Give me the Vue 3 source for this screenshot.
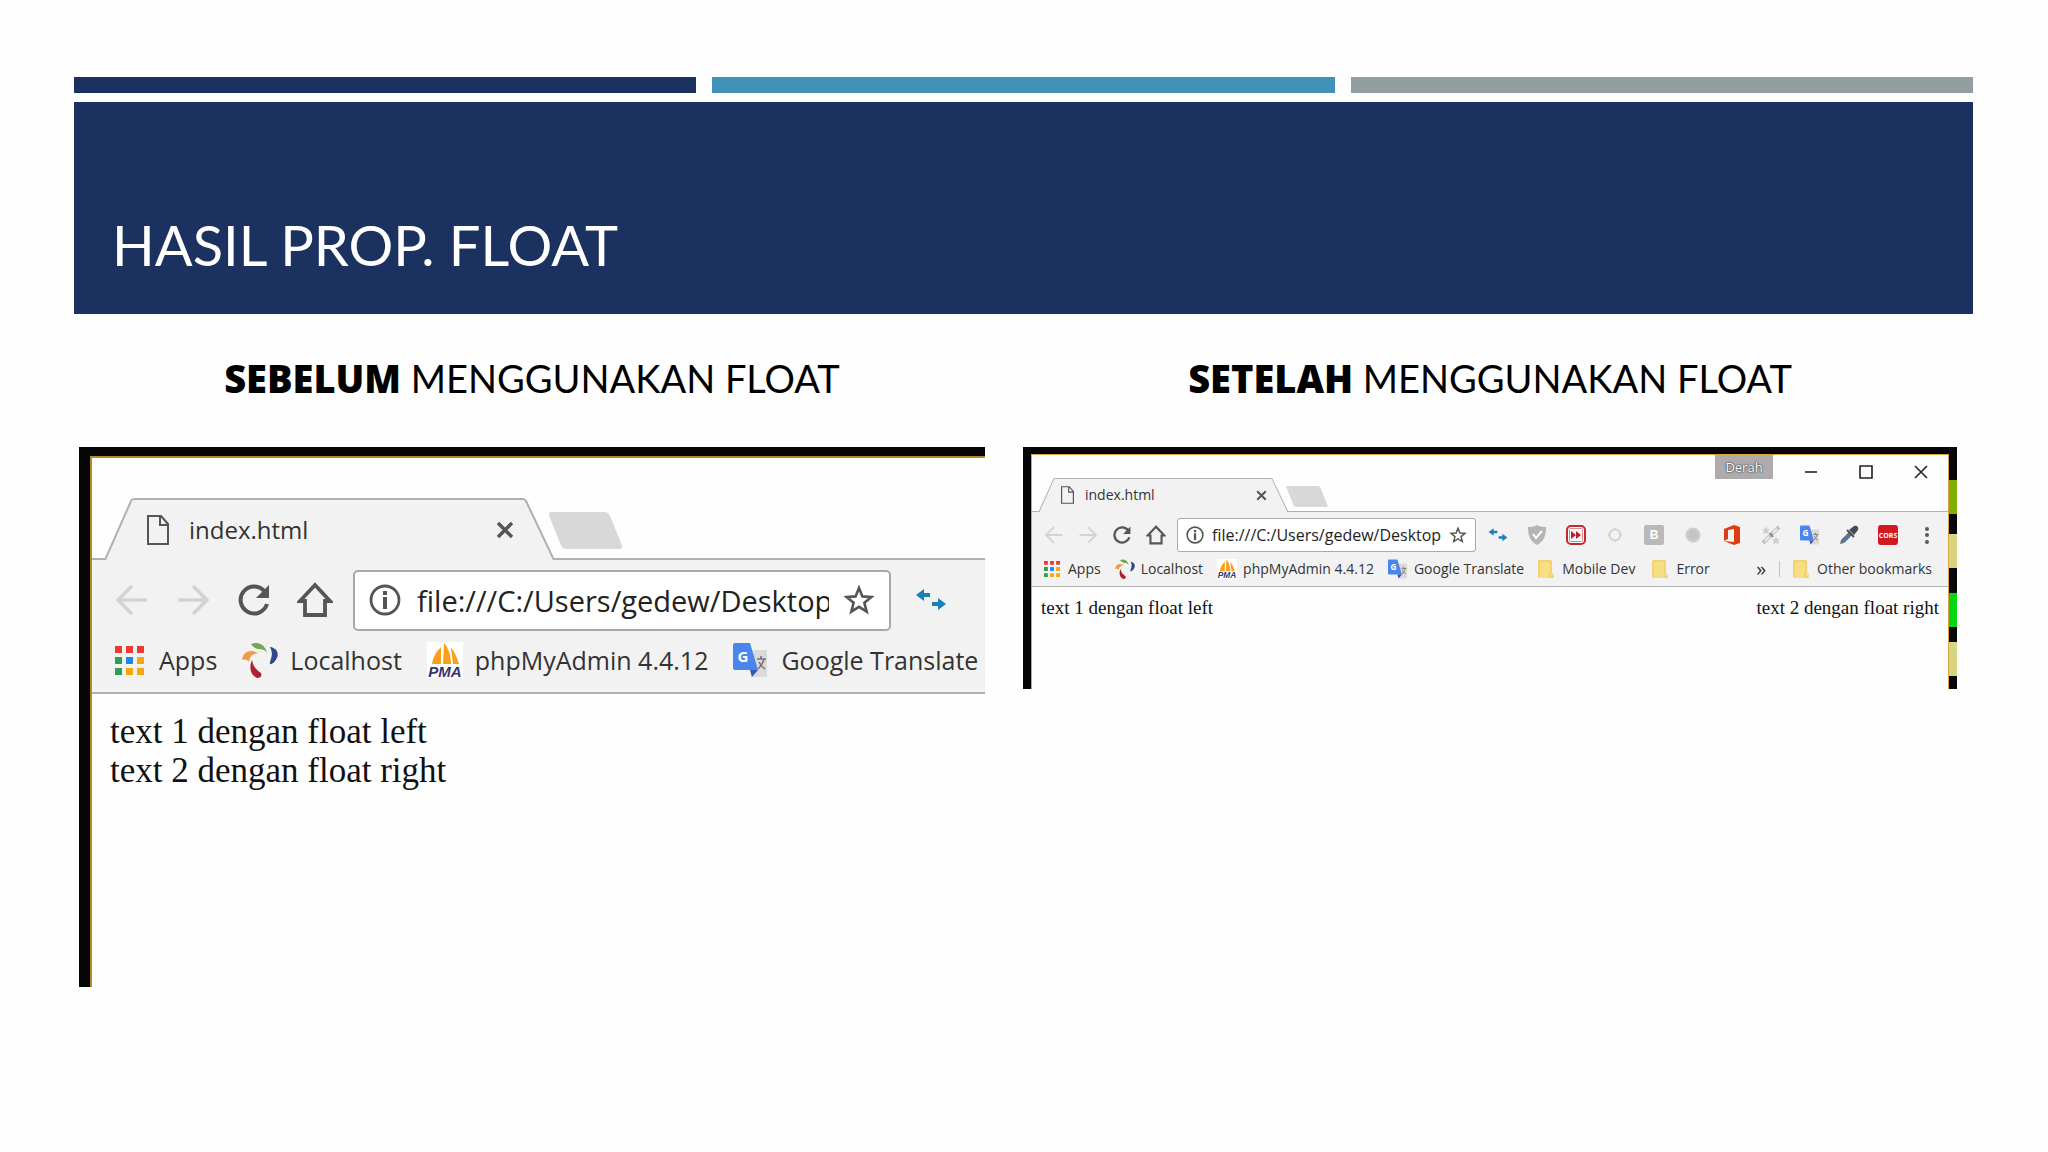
<template>
  <main class="slide">
    <!-- Shared icon shapes -->
    <svg class="sprite" aria-hidden="true">
      <symbol id="i-page" viewBox="0 0 22 30">
        <path d="M1 1h13l7 8v20H1z M13 1v9h8" fill="none" stroke="#555" stroke-width="2" />
      </symbol>
      <symbol id="i-close" viewBox="0 0 18 18">
        <path d="M2 2l14 14M16 2L2 16" stroke="#555" stroke-width="3.4" />
      </symbol>
      <symbol id="i-back" viewBox="0 0 32 32">
        <path d="M31 16H3M16 2L2 16l14 14" fill="none" stroke="#d3d3d5" stroke-width="3.4" />
      </symbol>
      <symbol id="i-forward" viewBox="0 0 32 32">
        <path d="M1 16h28M16 2l14 14-14 14" fill="none" stroke="#d3d3d5" stroke-width="3.4" />
      </symbol>
      <symbol id="i-reload" viewBox="0 0 32 32">
        <path d="M27 8A13.5 13.5 0 1 0 29 20" fill="none" stroke="#555" stroke-width="4" />
        <path d="M31 1v13H18z" fill="#555" />
      </symbol>
      <symbol id="i-home" viewBox="0 0 36 36">
        <path d="M18 3L3 19h5v14h20V19h5z" fill="none" stroke="#555" stroke-width="3.8" />
      </symbol>
      <symbol id="i-info" viewBox="0 0 32 32">
        <circle cx="16" cy="16" r="14" fill="none" stroke="#555" stroke-width="2.8" />
        <path d="M14 7h4v4h-4zM14 13h4v12h-4z" fill="#555" />
      </symbol>
      <symbol id="i-star" viewBox="0 0 32 32">
        <path d="M16 4l3.4 8.4 9 .6-7 5.8 2.3 8.8-7.7-4.8-7.7 4.8 2.3-8.8-7-5.8 9-.6z" fill="none" stroke="#555" stroke-width="2.6" />
      </symbol>
      <symbol id="i-arrows" viewBox="0 0 32 32">
        <path d="M1 11l8-6v4h6v4H9v4zM31 20l-8-6v4h-6v4h6v4z" fill="#1b7fb8" />
      </symbol>
      <symbol id="i-apps" viewBox="0 0 29 29">
        <path d="M0 0h7v7H0zM11 0h7v7h-7zM22 0h7v7h-7z" fill="#ee3b2f" />
        <path d="M0 11h7v7H0zM0 22h7v7H0z" fill="#2f9e54" />
        <path d="M11 11h7v7h-7z" fill="#2186ea" />
        <path d="M22 11h7v7h-7zM11 22h7v7h-7zM22 22h7v7h-7z" fill="#f7a80d" />
      </symbol>
      <symbol id="i-localhost" viewBox="0 0 36 36">
        <path d="M9 2c7-3 14 0 16 9-2-3-4-4-8-4-3 0-6-2-8-5z" fill="#6fa84e" />
        <path d="M28 5c8 1 10 8 5 14-3 4-6 4-5 1 2-6 3-9 0-15z" fill="#30478c" />
        <path d="M0 18C1 9 9 7 16 11c-6 1-8 3-9 9-1-2-4-3-7-2z" fill="#f29a4a" />
        <path d="M10 18c-3 7-2 15 5 18 4 0 5-2 4-5-5-3-8-7-9-13z" fill="#ad2230" />
      </symbol>
      <symbol id="i-pma" viewBox="0 0 36 36">
        <path d="M0 0h36v36H0z" fill="#fff" />
        <path d="M14 5v17H5C6 15 9 10 14 5zM17 1c5 6 7 13 7 21h-8zM24 5c4 5 6 11 8 17h-6z" fill="#f8a01c" />
        <text x="18" y="35" class="pma-text">PMA</text>
      </symbol>
      <symbol id="i-translate" viewBox="0 0 36 36">
        <path d="M14 8h20v27H18z" fill="#dadada" />
        <path d="M2 1h15l8 27H2q-2 0-2-2V3q0-2 2-2z" fill="#4a85ee" />
        <path d="M17 28h8l-6 7z" fill="#3358b8" />
        <path d="M24 17h9M28 14v3M31 17c-1 5-4 8-6 10M26 20c2 4 3 5 6 7" fill="none" stroke="#777" stroke-width="1.6" />
        <text x="10" y="20" class="g-text">G</text>
      </symbol>
      <symbol id="i-shield" viewBox="0 0 20 20">
        <path d="M1 2q6 0 9-2 3 2 9 2c0 9-2 14-9 18C3 16 1 11 1 2z" fill="#b5b5b5" />
        <path d="M6 9l3 4 6-7" fill="none" stroke="#fff" stroke-width="2" />
      </symbol>
      <symbol id="i-skip" viewBox="0 0 20 20">
        <rect x="1" y="1" width="18" height="18" rx="4" fill="#fff" stroke="#c22830" stroke-width="2" />
        <rect x="3.5" y="3.5" width="13" height="13" rx="1" fill="none" stroke="#d9636a" stroke-width=".8" />
        <path d="M5 6l5 4-5 4zM10 6l5 4-5 4z" fill="#b81f28" />
      </symbol>
      <symbol id="i-ring" viewBox="0 0 20 20">
        <circle cx="10" cy="10" r="5.5" fill="none" stroke="#d2d2d4" stroke-width="2" />
        <path d="M10 3v2M10 15v2M3 10h2M15 10h2" stroke="#d2d2d4" stroke-width="2" />
      </symbol>
      <symbol id="i-b" viewBox="0 0 20 20">
        <rect width="20" height="20" rx="2" fill="#b9b9b9" />
        <text x="10" y="14" class="b-text">B</text>
      </symbol>
      <symbol id="i-dot" viewBox="0 0 20 20">
        <circle cx="10" cy="10" r="7.5" fill="#cdcdcd" />
        <circle cx="10" cy="10" r="5" fill="#c4c4c4" />
      </symbol>
      <symbol id="i-office" viewBox="0 0 20 20">
        <path d="M2 4l10-4 6 2v16l-6 2-10-4 10 1V4L6 5v9l-4 2z" fill="#dc3e12" />
      </symbol>
      <symbol id="i-tools" viewBox="0 0 20 20">
        <path d="M5 1l1 3 3 0-2 2 1 3-3-1-3 1 1-3-2-2h3zM15 11l1 3h3l-2 2 1 3-3-1-3 1 1-3-2-2h3z" fill="#cdcdcd" />
        <path d="M2 18L18 2" stroke="#c2c2c2" stroke-width="4" />
        <path d="M4 16l4-4M12 8l4-4" stroke="#eee" stroke-width="2" />
        <path d="M9 8l3 4" stroke="#888" stroke-width="2" />
      </symbol>
      <symbol id="i-dropper" viewBox="0 0 20 20">
        <path d="M1 19l1-4 8-8 3 3-8 8z" fill="#6b7078" />
        <path d="M3 17l1-2 5-4 2 1-5 5z" fill="#3f76cf" />
        <path d="M8 5l7 7" stroke="#484d55" stroke-width="2" />
        <path d="M10 5l5-4c3-1 5 1 4 4l-4 5z" fill="#484d55" />
      </symbol>
      <symbol id="i-cors" viewBox="0 0 20 20">
        <rect width="20" height="20" rx="3" fill="#d21820" />
        <text x="10" y="13" class="cors-text">CORS</text>
      </symbol>
      <symbol id="i-menu" viewBox="0 0 20 20">
        <g fill="#5a5a5a">
          <circle cx="10" cy="4" r="2" />
          <circle cx="10" cy="10" r="2" />
          <circle cx="10" cy="17" r="2" />
        </g>
      </symbol>
      <symbol id="i-folder" viewBox="0 0 16 18">
        <path d="M0 1q0-1 1-1h12l1 1v12l2 1v4H1q-1 0-1-1z" fill="#f8de82" />
        <path d="M1 17V1h12v12l-1 1v3h3" fill="none" stroke="#e9c75c" />
      </symbol>
    </svg>

    <div class="bars">
      <span class="bar navy"></span>
      <span class="bar blue"></span>
      <span class="bar gray"></span>
    </div>
    <header class="banner">
      <h1>HASIL PROP. FLOAT</h1>
    </header>

    <div class="columns">
      <section v-for="shot in shots" :key="shot.id" :class="['column', shot.id]">
        <h2><strong>{{ shot.lead }}</strong> MENGGUNAKAN FLOAT</h2>
        <div class="desktop">
          <div class="window">
            <div class="titlebar">
              <div class="tab">
                <svg class="tab-shape" viewBox="0 0 449 62" preserveAspectRatio="none" aria-hidden="true">
                  <path d="M0 62L26 3Q27 1 29 1H418Q420 1 421 3L449 62" />
                </svg>
                <svg class="page-icon"><use href="#i-page" /></svg>
                <span class="tab-title">index.html</span>
                <button class="tab-close" aria-label="Close tab"><svg><use href="#i-close" /></svg></button>
              </div>
              <button class="new-tab" aria-label="New tab"></button>
              <div v-if="shot.full" class="controls">
                <span class="user">Derah</span>
                <button aria-label="Minimize"><svg viewBox="0 0 14 14"><path d="M1 7h12" /></svg></button>
                <button aria-label="Maximize"><svg viewBox="0 0 14 14"><path d="M1 1h12v12H1z" /></svg></button>
                <button aria-label="Close"><svg viewBox="0 0 14 14"><path d="M1 1l12 12M13 1L1 13" /></svg></button>
              </div>
            </div>

            <div class="toolbar">
              <button v-for="name in navIcons" :key="name" class="nav" :aria-label="name">
                <svg><use :href="'#i-' + name" /></svg>
              </button>
              <div class="omnibox">
                <svg><use href="#i-info" /></svg>
                <input type="text" aria-label="Address" value="file:///C:/Users/gedew/Desktop" />
                <button aria-label="Bookmark this page"><svg><use href="#i-star" /></svg></button>
              </div>
              <div class="extensions">
                <button v-for="name in shot.extensions" :key="name" :aria-label="name">
                  <svg><use :href="'#i-' + name" /></svg>
                </button>
              </div>
            </div>

            <nav class="bookmarks">
              <a v-for="mark in shot.bookmarks" :key="mark.label" href="#" :class="mark.icon">
                <svg><use :href="'#i-' + mark.icon" /></svg>
                <span>{{ mark.label }}</span>
              </a>
              <div v-if="shot.full" class="overflow">
                <button aria-label="More bookmarks">»</button>
                <a href="#" class="folder"><svg><use href="#i-folder" /></svg><span>Other bookmarks</span></a>
              </div>
            </nav>

            <div class="page">
              <div>text 1 dengan float left</div>
              <div>text 2 dengan float right</div>
            </div>
          </div>
          <div v-if="shot.full" class="wallpaper"></div>
        </div>
      </section>
    </div>
  </main>
</template>

<script setup>
const navIcons = ['back', 'forward', 'reload', 'home'];

const bookmarks = [
  { icon: 'apps', label: 'Apps' },
  { icon: 'localhost', label: 'Localhost' },
  { icon: 'pma', label: 'phpMyAdmin 4.4.12' },
  { icon: 'translate', label: 'Google Translate' },
];

const shots = [
  {
    id: 'before',
    lead: 'SEBELUM',
    full: false,
    extensions: ['arrows'],
    bookmarks,
  },
  {
    id: 'after',
    lead: 'SETELAH',
    full: true,
    extensions: ['arrows', 'shield', 'skip', 'ring', 'b', 'dot', 'office', 'tools', 'translate', 'dropper', 'cors', 'menu'],
    bookmarks: [
      ...bookmarks,
      { icon: 'folder', label: 'Mobile Dev' },
      { icon: 'folder', label: 'Error' },
    ],
  },
];
</script>

<style>
body {
  margin: 0;
  background: #fefefe;
}
</style>

<style scoped>
.slide {
  box-sizing: border-box;
  padding: 77px 75px 0 74px;
  font-family: Lato, "Open Sans", sans-serif;
  color: #000;
}

.sprite {
  display: none;
}

.pma-text {
  font: italic bold 15px "Liberation Sans", sans-serif;
  fill: #34346f;
  text-anchor: middle;
}

.g-text {
  font: bold 15px "Open Sans", sans-serif;
  fill: #fff;
  text-anchor: middle;
}

.b-text {
  font: bold 12px "Liberation Sans", sans-serif;
  fill: #fff;
  text-anchor: middle;
}

.cors-text {
  font: bold 7px "Open Sans", sans-serif;
  fill: #fff;
  text-anchor: middle;
}

.bars {
  display: grid;
  grid-template-columns: repeat(3, 1fr);
  gap: 16px;
}

.bar {
  height: 16px;
}

.navy {
  background: #1a315f;
}

.blue {
  background: #4191b9;
}

.gray {
  background: #929fa1;
}

.banner {
  display: flex;
  align-items: flex-end;
  box-sizing: border-box;
  height: 212px;
  margin-top: 9px;
  padding: 0 38px 35px;
  background: #1b3160;
}

h1 {
  margin: 0;
  font-size: 56px;
  line-height: 68px;
  font-weight: 400;
  color: #fff;
}

.columns {
  display: grid;
  grid-template-columns: minmax(0, 906fr) minmax(0, 934fr);
  gap: 38px;
  align-items: start;
  padding: 40px 16px 0 5px;
}

h2 {
  margin: 0 0 45px;
  font-size: 38px;
  line-height: 48px;
  font-weight: 400;
  text-align: center;
  white-space: nowrap;
}

h2 strong {
  font-family: "Open Sans", sans-serif;
  font-weight: 800;
}

button {
  display: flex;
  align-items: center;
  justify-content: center;
  flex: none;
  padding: 0;
  border: 0;
  background: none;
  font: inherit;
  color: inherit;
}

svg {
  display: block;
  flex: none;
}

/* Sizes of the two browser windows */
.before {
  --frame: 2px;
  --gold: #b18a2c;
  --icon: 32px;
  --text: 25px;
}

.after {
  --frame: 1px;
  --gold: #d9a441;
  --icon: 18px;
  --text: 14px;
}

.desktop {
  display: flex;
  background: #050505;
}

.before .desktop {
  padding: 9px 0 0 11px;
}

.after .desktop {
  padding: 7px 0 0 8px;
}

.window {
  flex: 1;
  min-width: 0;
  border: solid var(--gold);
  border-width: var(--frame) 0 0 var(--frame);
  background: #fefefe;
  font-family: "Open Sans", "Noto Sans", sans-serif;
  color: #333;
}

.after .window {
  border-right-width: 1px;
}

.titlebar {
  display: flex;
  align-items: flex-end;
  box-sizing: border-box;
  height: 102px;
  padding-left: 13px;
  border-bottom: var(--frame) solid #b0b0b2;
}

.after .titlebar {
  height: 57px;
  padding-left: 7px;
}

.tab {
  position: relative;
  display: flex;
  align-items: center;
  box-sizing: border-box;
  width: 449px;
  height: 62px;
  margin-bottom: calc(-1 * var(--frame));
  padding: 2px 40px 0 42px;
}

.after .tab {
  width: 249px;
  height: 34px;
  padding: 0 21px 0 22px;
}

.tab-shape {
  position: absolute;
  inset: 0;
  width: 100%;
  height: 100%;
}

.tab-shape path {
  fill: #f2f2f3;
  stroke: #b0b0b2;
  stroke-width: var(--frame);
  vector-effect: non-scaling-stroke;
}

.page-icon,
.tab-title,
.tab-close {
  position: relative;
}

.page-icon {
  width: 22px;
  height: 30px;
}

.after .page-icon {
  width: 13px;
  height: 18px;
}

.tab-title {
  flex: 1;
  margin-left: 20px;
  font-size: 24px;
  line-height: 1;
}

.after .tab-title {
  margin-left: 11px;
  font-size: 14px;
}

.tab-close svg {
  width: 18px;
  height: 18px;
}

.after .tab-close svg {
  width: 11px;
  height: 11px;
}

.new-tab {
  width: 61px;
  height: 37px;
  margin: 0 0 9px 1px;
  border-radius: 4px;
  background: #d8d8d9;
  transform: skewX(22deg);
}

.after .new-tab {
  width: 34px;
  height: 21px;
  margin: 0 0 4px 2px;
  border-radius: 2px;
}

.controls {
  display: flex;
  align-self: flex-start;
  gap: 41px;
  margin-left: auto;
  padding-right: 20px;
}

.controls .user {
  width: 58px;
  margin-right: -10px;
  background: #adabad;
  font-size: 13px;
  line-height: 24px;
  text-align: center;
  color: #fff;
  text-shadow: 0 0 2px #222, 0 0 1px #444;
}

.controls svg {
  width: 14px;
  height: 14px;
  margin-top: 10px;
}

.controls path {
  fill: none;
  stroke: #222;
  stroke-width: 1.6;
}

.toolbar {
  display: flex;
  align-items: center;
  height: 80px;
  padding: 0 38px 0 22px;
  background: #f2f2f3;
}

.after .toolbar {
  height: 46px;
  padding: 0 11px 0 12px;
}

.nav {
  width: 36px;
  margin-right: 25px;
}

.after .nav {
  width: 20px;
  margin-right: 14px;
}

.nav svg {
  width: var(--icon);
  height: var(--icon);
}

.nav:nth-child(4) {
  margin-right: 20px;
}

.nav:nth-child(4) svg {
  width: 36px;
  height: 36px;
}

.after .nav:nth-child(4) {
  margin-right: 11px;
}

.after .nav:nth-child(4) svg {
  width: 20px;
  height: 20px;
}

.omnibox {
  display: flex;
  flex: 1;
  align-items: center;
  box-sizing: border-box;
  min-width: 0;
  height: 61px;
  padding: 0 14px;
  border: var(--frame) solid #a9a9ab;
  border-radius: 5px;
  background: #fff;
}

.after .omnibox {
  height: 34px;
  padding: 0 8px;
  border-radius: 3px;
}

.omnibox svg {
  width: var(--icon);
  height: var(--icon);
}

.omnibox input {
  flex: 1;
  min-width: 0;
  margin: 0 14px 0 16px;
  padding: 0;
  border: 0;
  outline: 0;
  background: none;
  font-family: inherit;
  font-size: 29px;
  color: #222;
}

.after .omnibox input {
  margin: 0 8px;
  font-size: 16px;
}

.extensions {
  display: flex;
  margin-left: 24px;
}

.extensions svg {
  width: var(--icon);
  height: var(--icon);
}

.after .extensions {
  gap: 19px;
  margin-left: 12px;
}

.after .extensions svg {
  width: 20px;
  height: 20px;
}

.bookmarks {
  display: flex;
  align-items: center;
  box-sizing: border-box;
  height: 54px;
  padding: 0 0 12px 23px;
  border-bottom: var(--frame) solid #b0b0b2;
  background: #f2f2f3;
  white-space: nowrap;
}

.after .bookmarks {
  height: 29px;
  padding: 0 16px 6px 12px;
}

.bookmarks a {
  display: flex;
  align-items: center;
  gap: 12px;
  margin-right: 25px;
  font-size: var(--text);
  line-height: 1;
  color: inherit;
  text-decoration: none;
}

.bookmarks .apps {
  gap: 15px;
}

.after .bookmarks a {
  gap: 6px;
  margin-right: 14px;
}

.after .bookmarks .apps,
.after .bookmarks .folder {
  gap: 8px;
}

.after .bookmarks .folder {
  margin-right: 17px;
}

.bookmarks svg {
  width: 36px;
  height: 36px;
}

.bookmarks .apps svg {
  width: 29px;
  height: 29px;
}

.after .bookmarks svg {
  width: 20px;
  height: 20px;
}

.after .bookmarks .apps svg,
.after .bookmarks .folder svg {
  width: 16px;
  height: 18px;
}

.overflow {
  display: flex;
  align-items: center;
  margin-left: auto;
}

.overflow button {
  padding-right: 13px;
  border-right: 1px solid #c4c4c6;
  font-size: 20px;
  line-height: 16px;
}

.after .overflow .folder {
  margin: 0 0 0 13px;
}

.page {
  min-height: 275px;
  padding: 18px 18px 0;
  font-family: "Liberation Serif", serif;
  font-size: 35px;
  line-height: 39px;
  color: #111;
}

.after .page {
  display: flex;
  justify-content: space-between;
  min-height: 92px;
  padding: 10px 9px 0;
  font-size: 19px;
  line-height: 22px;
}

/* Strip of the desktop behind the window */
.wallpaper {
  width: 8px;
  margin-top: -7px;
  background: linear-gradient(
    #08080c 33px, #83ae06 33px, #83ae06 67px,
    #08080c 67px, #08080c 87px, #d8d581 87px, #d8d581 121px,
    #08080c 121px, #08080c 146px, #05d813 146px, #05d813 180px,
    #08080c 180px, #08080c 195px, #d8d581 195px, #d8d581 229px, #08080c 229px
  );
}
</style>
